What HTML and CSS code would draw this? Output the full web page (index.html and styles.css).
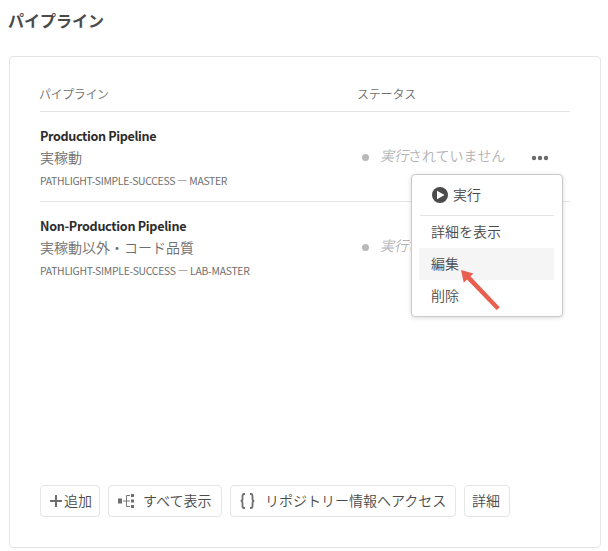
FILE: index.html
```html
<!DOCTYPE html>
<html lang="ja">
<head>
<meta charset="utf-8">
<title>パイプライン</title>
<link rel="stylesheet" href="styles.css">
</head>
<body>
<h1 class="title">パイプライン</h1>
<main class="card">
  <div class="head">
    <span class="head-name">パイプライン</span>
    <span class="head-status">ステータス</span>
  </div>
  <section class="row row-first">
    <div class="info">
      <div class="name name-prod">Production Pipeline</div>
      <div class="kind">実稼動</div>
      <div class="repo repo-prod">PATHLIGHT-SIMPLE-SUCCESS — MASTER</div>
    </div>
    <div class="status"><i class="dot"></i><span><em>実行</em>されていません</span></div>
    <button class="more" aria-label="その他"><svg width="18" height="6" viewBox="0 0 18 6"><circle cx="3" cy="3" r="2.2"/><circle cx="9" cy="3" r="2.2"/><circle cx="15" cy="3" r="2.2"/></svg></button>
    <div class="menu">
      <div class="item run">
        <svg width="16" height="16" viewBox="0 0 16 16"><circle cx="8" cy="8" r="8" fill="#4b4b4b"/><path d="M5 3.7v8.6L12.6 8z" fill="#fff"/></svg>
        <span>実行</span>
      </div>
      <div class="divider"></div>
      <div class="item">詳細を表示</div>
      <div class="item active">編集</div>
      <div class="item">削除</div>
      <svg class="pointer" width="44" height="46" viewBox="0 0 44 46"><path d="M4 4L16.4 7.4L13.4 10.3L42.8 41.2L39.6 44L10 13.6L6.8 16.8Z"/></svg>
    </div>
  </section>
  <section class="row">
    <div class="info">
      <div class="name name-non">Non-Production Pipeline</div>
      <div class="kind">実稼動以外・コード品質</div>
      <div class="repo repo-non">PATHLIGHT-SIMPLE-SUCCESS — LAB-MASTER</div>
    </div>
    <div class="status"><i class="dot"></i><span><em>実行</em>されていません</span></div>
  </section>
  <footer class="actions">
    <button class="btn btn-add"><svg width="12" height="12" viewBox="0 0 12 12"><path d="M6 0v12M0 6h12" stroke="#6e6e6e" stroke-width="2"/></svg><span>追加</span></button>
    <button class="btn btn-all"><svg width="17" height="14" viewBox="0 0 17 14"><path d="M0 4.5h4v5H0zM13 0h3v3h-3zM13 5.5h3v3h-3zM13 11h3v3h-3z" fill="#6e6e6e"/><path d="M5 7h7M12 1.5H8.5v11H12" fill="none" stroke="#777"/></svg><span>すべて表示</span></button>
    <button class="btn btn-repo"><svg width="15" height="16" viewBox="0 0 15 16"><path d="M5 1H4Q2.5 1 2.5 3V6Q2.5 8 .7 8Q2.5 8 2.5 10V13Q2.5 15 4 15H5M10 1H11Q12.5 1 12.5 3V6Q12.5 8 14.3 8Q12.5 8 12.5 10V13Q12.5 15 11 15H10" fill="none" stroke="#707070" stroke-width="1.8"/></svg><span>リポジトリー情報へアクセス</span></button>
    <button class="btn btn-detail"><span>詳細</span></button>
  </footer>
</main>
</body>
</html>
```
FILE: styles.css
```css
* { box-sizing: border-box; }
body {
  margin: 0;
  padding: 0 7px 3px 9px;
  width: 608px;
  height: 551px;
  overflow: hidden;
  background: #fff;
  color: #4b4b4b;
  font-family: "Noto Sans CJK JP", "Liberation Sans", sans-serif;
  font-weight: 350;
  font-size: 14px;
}
.title {
  height: 56px;
  margin: 0;
  padding-top: 8px;
  font-size: 16px;
  line-height: 24px;
  font-weight: 700;
  text-indent: -1px;
}
.card {
  display: flex;
  flex-direction: column;
  width: 592px;
  height: 492px;
  padding: 27px 30px 30px;
  border: 1px solid #e4e4e4;
  border-radius: 4px;
}
.head {
  display: grid;
  grid-template-columns: 317px 1fr;
  height: 28px;
  border-bottom: 1px solid #e4e4e4;
  font-size: 12px;
  line-height: 20px;
  color: #6e6e6e;
}
.head-name { letter-spacing: -0.4px; text-indent: -1px; }
.head-status { letter-spacing: -0.2px; }
.row {
  position: relative;
  display: grid;
  grid-template-columns: 321px 162px 47px;
  height: 90px;
  padding-top: 14px;
}
.row-first { border-bottom: 1px solid #e4e4e4; z-index: 1; }
.name {
  height: 21px;
  font-size: 12.6px;
  line-height: 20px;
  font-weight: 700;
  color: #2c2c2c;
  white-space: nowrap;
}
.name-prod { letter-spacing: -0.36px; }
.name-non { letter-spacing: -0.3px; }
.kind { height: 23px; line-height: 20px; color: #6e6e6e; }
.repo {
  font-size: 10.4px;
  line-height: 22px;
  font-weight: 400;
  color: #6e6e6e;
  white-space: nowrap;
}
.repo-prod { letter-spacing: -0.29px; }
.repo-non { letter-spacing: -0.26px; }
.status {
  display: flex;
  gap: 11px;
  height: 40px;
  padding-top: 19px;
  line-height: 20px;
  white-space: nowrap;
  color: #b3b3b3;
}
.dot {
  flex: none;
  width: 7px;
  height: 7px;
  margin: 9px 0 0 1px;
  border-radius: 50%;
  background: #b9b9b9;
}
.more {
  display: block;
  width: 18px;
  height: 6px;
  margin: 29px 0 0 8px;
  padding: 0;
  border: 0;
  background: none;
}
.more svg { display: block; fill: #6b6b6b; }
.menu {
  position: absolute;
  left: 371px;
  top: 62px;
  width: 152px;
  height: 143px;
  padding: 4px 8px 5px 7px;
  background: #fff;
  border: 1px solid #cacaca;
  border-radius: 4px;
  box-shadow: 0 1px 4px rgba(0, 0, 0, .15);
}
.item {
  height: 32px;
  padding-left: 12px;
  line-height: 30px;
}
.active { background: #f5f5f5; }
.run {
  display: flex;
  align-items: center;
  gap: 5px;
  padding-left: 13px;
}
.run span { padding-bottom: 2px; }
.divider { height: 1px; margin: 4px 0 0 1px; background: #e4e4e4; }
.pointer { position: absolute; left: 45px; top: 91px; fill: #e95f4f; }
.actions { display: flex; gap: 8px; margin-top: auto; }
.btn {
  display: flex;
  align-items: center;
  height: 32px;
  padding: 0;
  border: 1px solid #e4e4e4;
  border-radius: 4px;
  background: #fff;
  color: #4b4b4b;
  font: inherit;
  white-space: nowrap;
}
.btn svg { flex: none; }
.btn span { padding-bottom: 2px; }
.btn-add { width: 60px; padding-left: 9px; gap: 2px; }
.btn-all { width: 114px; padding-left: 9px; gap: 8px; }
.btn-repo { width: 226px; padding-left: 9px; gap: 10px; }
.btn-detail { width: 46px; padding-left: 7px; }
```
